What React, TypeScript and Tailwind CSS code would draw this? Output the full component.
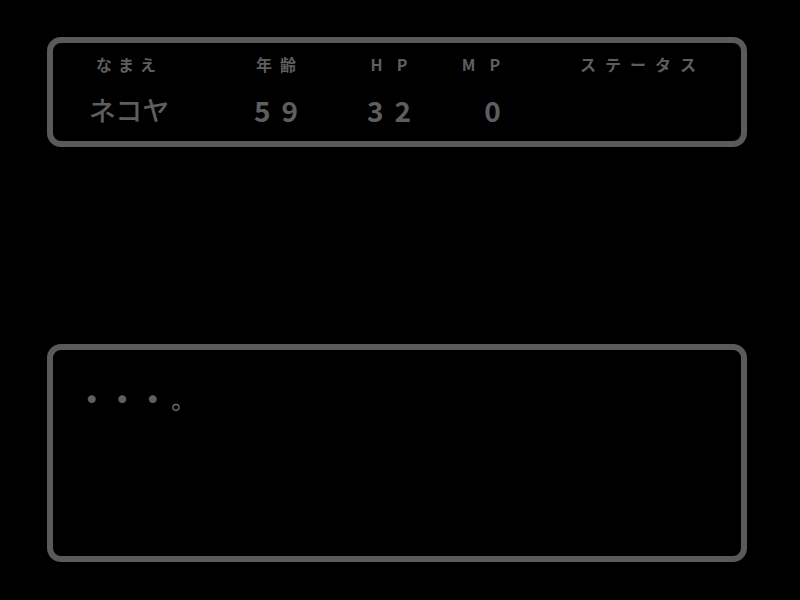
const font = { fontFamily: '"Noto Sans CJK JP", "Noto Sans", sans-serif' };

type Col = {
  label: string;
  value: string;
  w: string;
  labelCls: string;
  labelShift: number;
  valueShift: number;
};

const cols: Col[] = [
  { label: "なまえ", value: "ネコヤ", w: "w-[146px]", labelCls: "tracking-[6px]", labelShift: 6, valueShift: 6 },
  { label: "年齢", value: "59", w: "w-[154px]", labelCls: "tracking-[8px]", labelShift: 8, valueShift: 11 },
  { label: "HP", value: "32", w: "w-[72px]", labelCls: "tracking-[14px]", labelShift: 14, valueShift: 11 },
  { label: "MP", value: "0", w: "w-[120px]", labelCls: "tracking-[14px]", labelShift: 6, valueShift: 26 },
  { label: "ステータス", value: "", w: "w-[186px]", labelCls: "tracking-[9px]", labelShift: 9, valueShift: 0 },
];

function MessageText({ text }: { text: string }) {
  return (
    <div className="flex h-[30px] items-center">
      {Array.from(text).map((ch, i) =>
        ch === "。" ? (
          <span
            key={i}
            className="w-[30.5px] h-[30px] flex items-center justify-center text-[24px] leading-none text-[#747474]"
          >
            {ch}
          </span>
        ) : (
          <span
            key={i}
            className="w-[30.5px] h-[30px] flex items-center justify-center text-[27px] leading-none text-[#606060]"
            style={{ fontFamily: '"DejaVu Sans", sans-serif' }}
          >
            •
          </span>
        )
      )}
    </div>
  );
}

export default function App() {
  return (
    <div className="w-[800px] h-[600px] bg-black overflow-hidden pt-[37px] pl-[47px] pr-[53px]" style={font}>
      <div className="h-[110px] border-[6px] border-[#5a5a5a] rounded-[14px] flex">
        {cols.map((c) => (
          <div key={c.label} className={`${c.w} flex flex-col items-center`}>
            <div
              className={`mt-[9px] h-[24px] flex items-center justify-center text-[16px] font-bold text-[#5e5e5e] ${c.labelCls}`}
              style={{ marginRight: `-${c.labelShift}px` }}
            >
              {c.label}
            </div>
            <div
              className={`mt-[16px] h-[36px] flex items-center justify-center text-[#5e5e5e] ${
                c.label === "なまえ" ? "text-[27px] font-medium" : "text-[28px] font-semibold tracking-[11px]"
              }`}
              style={{ marginRight: `-${c.valueShift}px` }}
            >
              {c.value}
            </div>
          </div>
        ))}
      </div>
      <div className="mt-[197px] h-[218px] border-[6px] border-[#5a5a5a] rounded-[14px] pt-[34px] pl-[23.5px]">
        <MessageText text="・・・。" />
      </div>
    </div>
  );
}
